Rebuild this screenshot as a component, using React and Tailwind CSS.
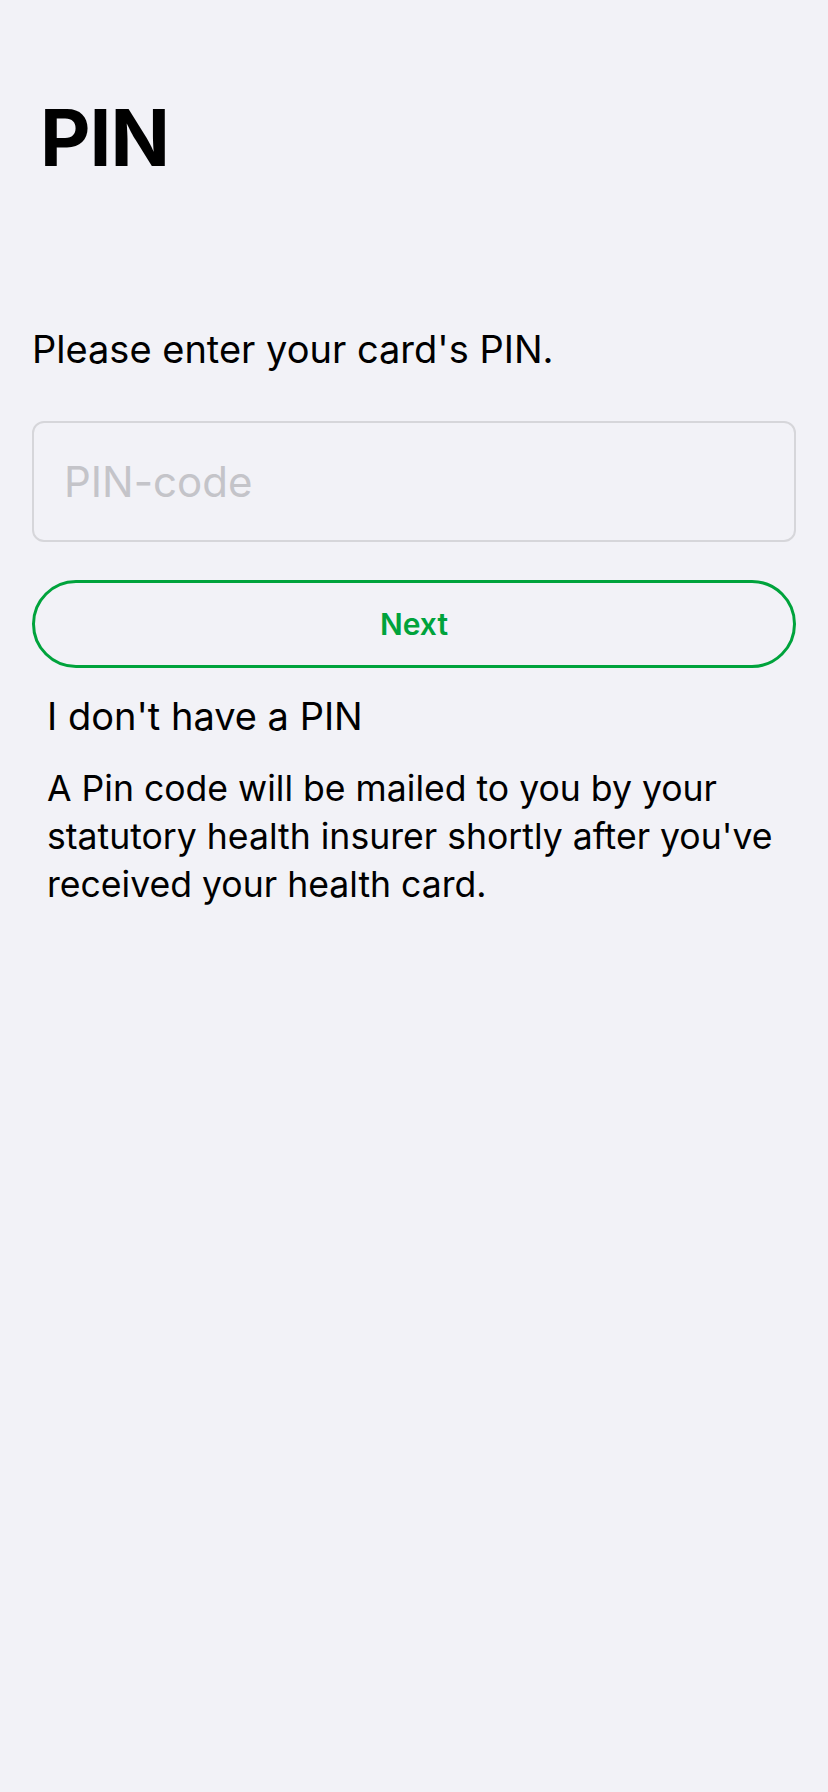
export default function App() {
  return (
    <div className="min-h-screen w-full bg-[#f2f2f7] font-['Inter','Noto_Sans',sans-serif] text-black">
      <div className="px-8 pt-[99px]">
        <h1 className="pl-[8px] text-[78px] font-bold leading-none tracking-[-1px]">PIN</h1>

        <p className="mt-[149px] text-[38px] leading-[46px]">
          Please enter your card's PIN.
        </p>

        <input
          type="text"
          placeholder="PIN-code"
          className="mt-[49px] block h-[121px] w-full rounded-[12px] border-2 border-[#d6d6da] bg-transparent px-[30px] text-[42px] outline-none placeholder:text-[#c4c4c9]"
        />

        <button className="mt-[38px] flex h-[88px] w-full items-center justify-center rounded-full border-[3.5px] border-[#00a33c] text-[30px] font-semibold text-[#00a33c]">
          Next
        </button>

        <div className="px-[15px]">
          <h2 className="mt-[25px] text-[38px] leading-[46px]">I don't have a PIN</h2>
          <p className="mt-[26px] text-[35.6px] leading-[48px]">
            A Pin code will be mailed to you by your statutory health insurer shortly after you've received your health card.
          </p>
        </div>
      </div>
    </div>
  );
}
